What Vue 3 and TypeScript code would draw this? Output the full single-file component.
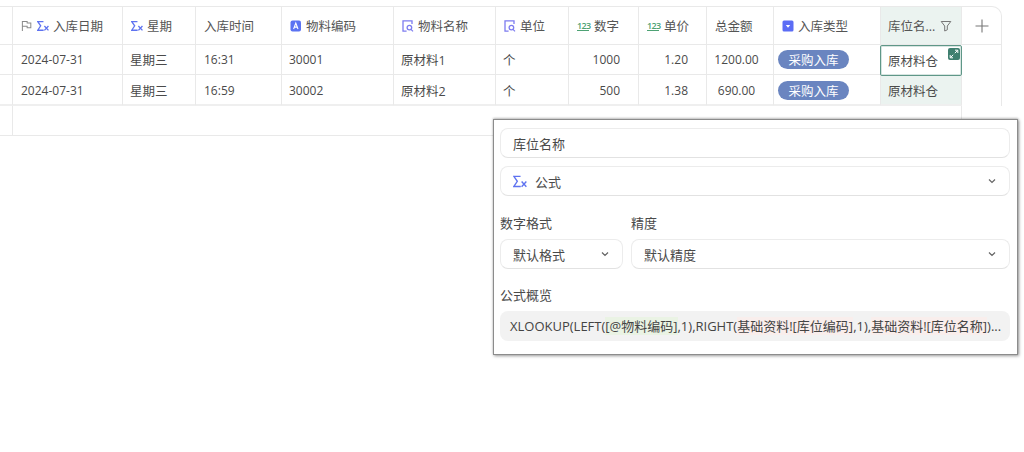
<template>
  <div class="page">
    <div class="sheet">
      <div class="row row--head">
        <div class="cell cell--gutter"></div>
        <div
          v-for="col in columns"
          :key="col.name"
          class="cell cell--head"
          :class="{ 'cell--active': col.active }"
        >
          <svg v-if="col.flag" class="ico ico--flag" viewBox="0 0 12 12">
            <path d="M1.5 11.5V1h5.2v1.6h4v5.2h-4V6.2H1.5" fill="none" stroke="#8a8a8a" stroke-width="1.1" />
          </svg>
          <svg v-if="col.icon === 'sum'" class="ico ico--sum" viewBox="0 0 13 12">
            <path d="M7 1.2H0.8l3.2 4.6-3.2 4.8H7.2" fill="none" stroke="#5f73f0" stroke-width="1.4" />
            <path d="M8 6l4.4 4.8M12.4 6L8 10.8" fill="none" stroke="#5f73f0" stroke-width="1.4" />
          </svg>
          <svg v-else-if="col.icon === 'text'" class="ico" viewBox="0 0 12 12">
            <rect x="0.5" y="0.5" width="10.5" height="11" rx="2" fill="#5b73f2" />
            <path d="M3.6 9l2.2-6 2.2 6M4.4 7.1h2.8" fill="none" stroke="#fff" stroke-width="1.1" />
          </svg>
          <svg v-else-if="col.icon === 'lookup'" class="ico" viewBox="0 0 12 12">
            <path d="M4.6 11.2H1V0.8h9V4" fill="none" stroke="#7d7cf0" stroke-width="1.3" />
            <circle cx="7.4" cy="7.6" r="2.3" fill="none" stroke="#7d7cf0" stroke-width="1.3" />
            <path d="M9 9.4l2 2" stroke="#7d7cf0" stroke-width="1.3" />
          </svg>
          <span v-else-if="col.icon === 'num'" class="ico-num">123</span>
          <svg v-else-if="col.icon === 'select'" class="ico" viewBox="0 0 12 12">
            <rect x="0.5" y="0.5" width="11" height="11" rx="1.5" fill="#5b6cf5" />
            <path d="M3.8 5h4.4L6 7.8z" fill="#fff" />
          </svg>
          <span class="head-text">{{ col.name }}</span>
          <svg v-if="col.active" class="ico ico--filter" viewBox="0 0 12 12">
            <path d="M1.2 1.5h9.6L7.3 6v3.8L4.7 11V6z" fill="none" stroke="#777" stroke-width="1" />
          </svg>
        </div>
        <div class="cell cell--add">
          <svg viewBox="0 0 14 14" class="plus">
            <path d="M7 0.5v13M0.5 7h13" stroke="#777" stroke-width="1.1" />
          </svg>
        </div>
      </div>

      <div v-for="(r, i) in rows" :key="r.code" class="row row--data" :class="{ 'row--last': i === rows.length - 1 }">
        <div class="cell cell--gutter"></div>
        <div class="cell latin pad-date">2024-07-31</div>
        <div class="cell">星期三</div>
        <div class="cell latin pad-date">{{ r.time }}</div>
        <div class="cell latin">{{ r.code }}</div>
        <div class="cell">{{ r.name }}</div>
        <div class="cell">个</div>
        <div class="cell latin cell--num">{{ r.qty }}</div>
        <div class="cell latin cell--num">{{ r.price }}</div>
        <div class="cell latin cell--total">{{ r.total }}</div>
        <div class="cell cell--tag"><span class="tag">采购入库</span></div>
        <div class="cell cell--active" :class="{ 'cell--selected': i === 0 }">
          原材料仓
          <span v-if="i === 0" class="expand">
            <svg viewBox="0 0 12 12">
              <path d="M6.8 5.2l2.8-2.8M7 2.2h2.8V5M5.2 6.8L2.4 9.6M2.2 7v2.8H5" fill="none" stroke="#fff" stroke-width="1" />
            </svg>
          </span>
        </div>
        <div class="cell cell--tail"></div>
      </div>

      <div class="row row--blank">
        <div class="cell cell--gutter"></div>
        <div class="blank-fill"></div>
      </div>
    </div>

    <div class="panel">
      <div class="field">库位名称</div>
      <div class="field field--select">
        <svg class="ico ico--type" viewBox="0 0 13 12">
          <path d="M7 1.2H0.8l3.2 4.6-3.2 4.8H7.2" fill="none" stroke="#5f73f0" stroke-width="1.3" />
          <path d="M8 6l4.4 4.8M12.4 6L8 10.8" fill="none" stroke="#5f73f0" stroke-width="1.3" />
        </svg>
        <span>公式</span>
        <svg class="chev" viewBox="0 0 10 10"><path d="M2 3.5l3 3 3-3" fill="none" stroke="#666" stroke-width="1.2" /></svg>
      </div>

      <div class="split">
        <div class="split-col split-col--format">
          <div class="label">数字格式</div>
          <div class="field field--select">
            <span>默认格式</span>
            <svg class="chev" viewBox="0 0 10 10"><path d="M2 3.5l3 3 3-3" fill="none" stroke="#666" stroke-width="1.2" /></svg>
          </div>
        </div>
        <div class="split-col split-col--precision">
          <div class="label">精度</div>
          <div class="field field--select">
            <span>默认精度</span>
            <svg class="chev" viewBox="0 0 10 10"><path d="M2 3.5l3 3 3-3" fill="none" stroke="#666" stroke-width="1.2" /></svg>
          </div>
        </div>
      </div>

      <div class="label label--formula">公式概览</div>
      <div class="formula">XLOOKUP(LEFT(<span class="hl-green">[@物料编码]</span>,1),RIGHT(<span class="hl-red">基础资料![库位编码]</span>,1),<span class="hl-red">基础资料![库位名称]</span>)...</div>
    </div>
  </div>
</template>

<script setup lang="ts">
interface Column {
  name: string;
  icon?: "sum" | "text" | "lookup" | "num" | "select";
  flag?: boolean;
  active?: boolean;
}

const columns: Column[] = [
  { name: "入库日期", icon: "sum", flag: true },
  { name: "星期", icon: "sum" },
  { name: "入库时间" },
  { name: "物料编码", icon: "text" },
  { name: "物料名称", icon: "lookup" },
  { name: "单位", icon: "lookup" },
  { name: "数字", icon: "num" },
  { name: "单价", icon: "num" },
  { name: "总金额" },
  { name: "入库类型", icon: "select" },
  { name: "库位名...", active: true },
];

const rows = [
  { time: "16:31", code: "30001", name: "原材料1", qty: "1000", price: "1.20", total: "1200.00" },
  { time: "16:59", code: "30002", name: "原材料2", qty: "500", price: "1.38", total: "690.00" },
];
</script>

<style>
html,
body {
  margin: 0;
  background: #fff;
}
</style>

<style scoped>
.page {
  position: relative;
  width: 1024px;
  height: 452px;
  overflow: hidden;
  padding-top: 6px;
  box-sizing: border-box;
  font-family: "Open Sans", "Noto Sans CJK SC", sans-serif;
  font-size: 12.5px;
  color: #4a4a4a;
}

.row {
  display: grid;
  grid-template-columns: 13px 110px 73px 86px 112px 102px 73px 70px 68px 67px 107px 81px 40px;
  width: 1002px;
}

.row--head {
  height: 39px;
}

.row--data {
  height: 30px;
}

.row--data + .row--data {
  height: 31px;
}

.row--blank {
  height: 30px;
  grid-template-columns: 13px 949px 40px;
}

.cell {
  display: flex;
  align-items: center;
  box-sizing: border-box;
  padding-left: 7px;
  border-right: 1px solid #e9e9e9;
  border-bottom: 1px solid #e9e9e9;
  white-space: nowrap;
  position: relative;
}

.latin {
  font-size: 12px;
}

.cell--head {
  gap: 4px;
  padding-left: 8px;
  border-top: 1px solid #e9e9e9;
  color: #555;
}

.cell--gutter {
  padding: 0;
}

.row--head .cell--gutter {
  border-top: 1px solid #e9e9e9;
}

.row--last .cell {
  padding-top: 1px;
  border-bottom-width: 2px;
  border-bottom-color: #efefef;
}

.row--last .cell--tail,
.cell--tail {
  border-bottom: none;
}

.cell--add {
  justify-content: center;
  padding: 0;
  border-top: 1px solid #e9e9e9;
  border-top-right-radius: 10px;
}

.plus {
  width: 14px;
  height: 14px;
}

.cell--num {
  justify-content: flex-end;
  padding-right: 18px;
}

.cell--total {
  justify-content: center;
  padding-left: 0;
  padding-right: 7px;
}

.cell--tag {
  padding-left: 4px;
}

.pad-date {
  padding-left: 8px;
}

.tag {
  display: inline-flex;
  align-items: center;
  justify-content: center;
  width: 71px;
  height: 19px;
  border-radius: 10px;
  background: #6a85c0;
  color: #fff;
}

.cell--active {
  background: #ebf3f0;
  padding-left: 7px;
}

.cell--selected {
  background: #fff;
  border: 1px solid #5f9788;
  border-radius: 2px;
  margin: 0 0 -1px -1px;
  height: 31px;
  padding-left: 7px;
  box-shadow: inset 0 0 0 1px rgba(95, 151, 136, 0.25);
  z-index: 1;
}

.expand {
  position: absolute;
  top: 2px;
  right: 1px;
  width: 12px;
  height: 12px;
  border-radius: 2px;
  background: #3f7f6f;
  display: flex;
}

.expand svg {
  width: 12px;
  height: 12px;
}

.ico {
  flex: none;
  width: 12px;
  height: 12px;
}

.ico--flag {
  width: 11px;
  margin-right: 1px;
}

.ico--filter {
  margin-left: auto;
  margin-right: 9px;
}

.ico-num {
  flex: none;
  width: 12px;
  margin-right: 1px;
  font-size: 9px;
  font-weight: 600;
  line-height: 9px;
  letter-spacing: -0.6px;
  color: #4ea274;
  border-bottom: 1px solid #4ea274;
  text-align: center;
}

.blank-fill {
  border-right: 1px solid #e9e9e9;
  border-bottom: 1px solid #e9e9e9;
  box-sizing: border-box;
}

.panel {
  position: absolute;
  left: 493px;
  top: 119px;
  width: 525px;
  height: 236px;
  box-sizing: border-box;
  padding: 8px 7px 0 6px;
  font-size: 13px;
  background: #fff;
  border: 1px solid #8c8c8c;
  box-shadow: 1px 1px 3px rgba(0, 0, 0, 0.4), 0 -1px 2px rgba(0, 0, 0, 0.2);
  z-index: 2;
}

.field {
  display: flex;
  align-items: center;
  box-sizing: border-box;
  height: 30px;
  padding: 0 12px;
  border: 1px solid #ececec;
  border-bottom-color: #e2e2e2;
  border-radius: 8px;
  color: #4a4a4a;
}

.field + .field {
  margin-top: 8px;
}

.field--select .chev {
  margin-left: auto;
}

.ico--type {
  width: 14px;
  height: 13px;
  margin-right: 8px;
}

.chev {
  width: 10px;
  height: 10px;
}

.split {
  display: flex;
  gap: 8px;
  margin-top: 17px;
}

.split-col--format {
  width: 123px;
  flex: none;
}

.split-col--precision {
  flex: 1;
}

.label {
  height: 20px;
  margin-bottom: 6px;
  line-height: 20px;
  color: #4a4a4a;
}

.label--formula {
  margin-top: 16px;
}

.formula {
  box-sizing: border-box;
  height: 30px;
  padding: 0 9px 0 10px;
  line-height: 30px;
  border-radius: 8px;
  background: #f2f2f2;
  color: #444;
  white-space: nowrap;
  overflow: hidden;
}

.hl-green {
  background: #eaf3e4;
}

.hl-red {
  background: #f9eeec;
}
</style>
